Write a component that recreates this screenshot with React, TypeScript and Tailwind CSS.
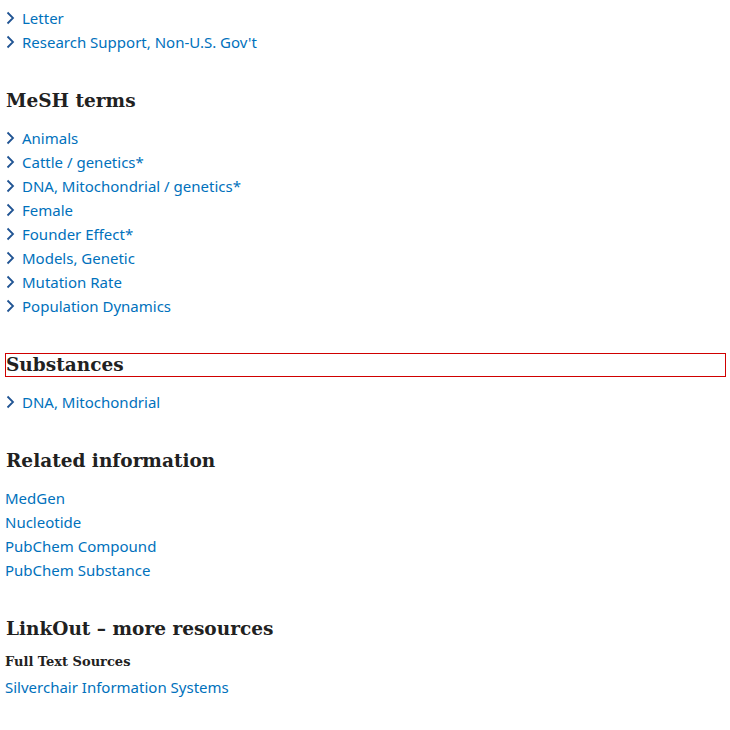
const pubTypes = ["Letter", "Research Support, Non-U.S. Gov't"];

const meshTerms = [
  "Animals",
  "Cattle / genetics*",
  "DNA, Mitochondrial / genetics*",
  "Female",
  "Founder Effect*",
  "Models, Genetic",
  "Mutation Rate",
  "Population Dynamics",
];

const substances = ["DNA, Mitochondrial"];

const related = ["MedGen", "Nucleotide", "PubChem Compound", "PubChem Substance"];

const sans = "font-['Noto_Sans',sans-serif]";
const serif = "font-['DejaVu_Serif',serif]";

const Chevron = () => (
  <svg width="12" height="16" viewBox="0 0 12 16" className="shrink-0" fill="none">
    <path d="M2.5 2.5 L8 8 L2.5 13.5" stroke="#205493" strokeWidth="1.8" />
  </svg>
);

const KeywordList = ({ items }: { items: string[] }) => (
  <ul className="flex flex-col">
    {items.map((item) => (
      <li key={item} className="flex h-[24px] items-center">
        <Chevron />
        <a href="#" className={`ml-[5px] text-[15px] text-[#0071bc] ${sans}`}>
          {item}
        </a>
      </li>
    ))}
  </ul>
);

const Heading = ({ children, outlined }: { children: string; outlined?: boolean }) => (
  <h2
    className={`mt-[35px] mb-[13px] flex h-[24px] items-center border text-[18.5px] font-bold leading-none text-[#212121] ${serif} ${
      outlined ? "border-[#d00000]" : "border-transparent"
    }`}
  >
    {children}
  </h2>
);

export default function App() {
  return (
    <main className="min-h-screen w-full bg-white pt-[6px] pr-[4px] pl-[5px]">
      <KeywordList items={pubTypes} />

      <Heading>MeSH terms</Heading>
      <KeywordList items={meshTerms} />

      <Heading outlined>Substances</Heading>
      <KeywordList items={substances} />

      <Heading>Related information</Heading>
      <ul className="flex flex-col">
        {related.map((item) => (
          <li key={item} className="flex h-[24px] items-center">
            <a href="#" className={`text-[15px] text-[#0071bc] ${sans}`}>
              {item}
            </a>
          </li>
        ))}
      </ul>

      <Heading>LinkOut – more resources</Heading>
      <h3 className={`-mt-[2px] flex h-[20px] items-center text-[13px] font-bold text-[#212121] ${serif}`}>
        Full Text Sources
      </h3>
      <div className="mt-[3px] flex h-[24px] items-center">
        <a href="#" className={`text-[15px] text-[#0071bc] ${sans}`}>
          Silverchair Information Systems
        </a>
      </div>
    </main>
  );
}
